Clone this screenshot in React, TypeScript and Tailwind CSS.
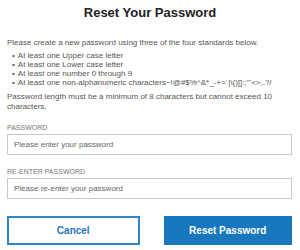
export default function App() {
  return (
    <div className="w-[300px] h-[250px] bg-white px-[7px] pt-[4px] text-[#555] font-['Liberation_Sans',Arial,sans-serif] overflow-hidden">
      {/* Header */}
      <h1 className="text-center text-[13px] leading-[17px] font-bold text-[#222]">
        Reset Your Password
      </h1>

      {/* Rules */}
      <p className="mt-[17px] text-[8px] leading-[9px]">
        Please create a new password using three of the four standards below.
      </p>
      <ul className="mt-[4px] pl-[5px] text-[8px] leading-[9px]">
        <li className="flex gap-[3px]"><span>•</span>At least one Upper case letter</li>
        <li className="flex gap-[3px]"><span>•</span>At least one Lower case letter</li>
        <li className="flex gap-[3px]"><span>•</span>At least one number 0 through 9</li>
        <li className="flex gap-[3px] whitespace-nowrap">
          <span>•</span>At least one non-alphanumeric characters~!@#$%^&amp;*_-+=`|\(){}[]:;"'&lt;&gt;,.?/
        </li>
      </ul>
      <p className="mt-[5px] text-[8px] leading-[10px] w-[274px]">
        Password length must be a minimum of 8 characters but cannot exceed 10 characters.
      </p>

      {/* Fields */}
      <label className="block mt-[11px] text-[7px] leading-[9px] text-[#777]">PASSWORD</label>
      <input
        type="password"
        placeholder="Please enter your password"
        className="mt-[2px] block w-[285px] h-[21px] border border-[#c8c8c8] px-[6px] text-[8px] placeholder:text-[#666] outline-none"
      />
      <label className="block mt-[12px] text-[7px] leading-[9px] text-[#777]">RE-ENTER PASSWORD</label>
      <input
        type="password"
        placeholder="Please re-enter your password"
        className="mt-[2px] block w-[285px] h-[21px] border border-[#c8c8c8] px-[6px] text-[8px] placeholder:text-[#666] outline-none"
      />

      {/* Actions */}
      <div className="mt-[17px] flex gap-[24px] w-[285px]">
        <button className="flex-1 h-[29px] border-2 border-[#2f86c8] bg-white text-[#1f76b8] text-[10px] font-bold">
          Cancel
        </button>
        <button className="flex-1 h-[29px] bg-[#1877bd] text-white text-[10px] font-bold">
          Reset Password
        </button>
      </div>
    </div>
  );
}
